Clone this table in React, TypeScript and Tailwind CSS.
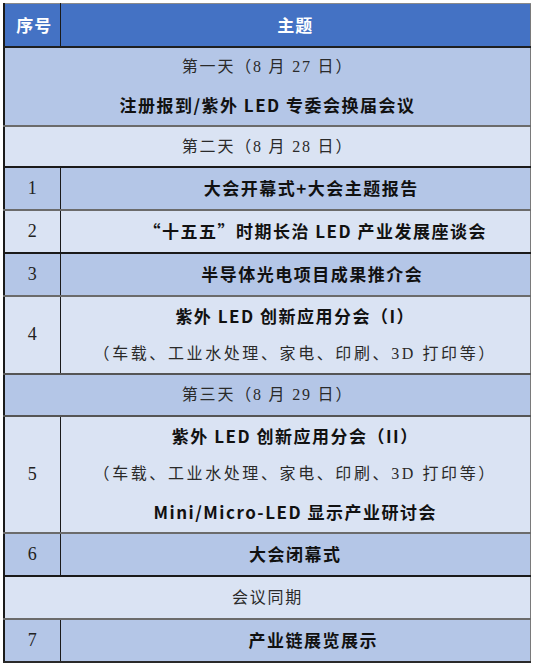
const serif = "font-['Liberation_Serif','Noto_Sans_CJK_SC',serif]";
const sans = "font-['Noto_Sans_CJK_SC','Liberation_Sans',sans-serif]";

const dark = "bg-[#b4c6e7]";
const light = "bg-[#dae3f3]";

type Line = { text: string; bold?: boolean; shift?: string; wide?: boolean };

type Row = {
	no?: string;
	lines: Line[];
	bg: string;
	h: string;
	top: string;
	pad?: string;
};

const rows: Row[] = [
	{
		lines: [{ text: "第一天（8 月 27 日）" }, { text: "注册报到/紫外 LED 专委会换届会议", bold: true }],
		bg: dark,
		h: "h-[79px]",
		top: "border-t-[#1f1f1f]",
		pad: "leading-[38px] pb-[1px]",
	},
	{ lines: [{ text: "第二天（8 月 28 日）" }], bg: light, h: "h-[41px]", top: "border-t-[#6b6b6b]" },
	{
		no: "1",
		lines: [{ text: "大会开幕式+大会主题报告", bold: true, shift: "pl-[32px]" }],
		bg: dark,
		h: "h-[43px]",
		top: "border-t-[#1a1a1a]",
	},
	{
		no: "2",
		lines: [{ text: "“十五五”时期长治 LED 产业发展座谈会", bold: true, shift: "pl-[40px]" }],
		bg: light,
		h: "h-[43px]",
		top: "border-t-[#6b6b6b]",
	},
	{
		no: "3",
		lines: [{ text: "半导体光电项目成果推介会", bold: true, shift: "pl-[34px]" }],
		bg: dark,
		h: "h-[43px]",
		top: "border-t-[#1a1a1a]",
	},
	{
		no: "4",
		lines: [
			{ text: "紫外 LED 创新应用分会（I）", bold: true },
			{ text: "（车载、工业水处理、家电、印刷、3D 打印等）", wide: true },
		],
		bg: light,
		h: "h-[78px]",
		top: "border-t-[#6b6b6b]",
	},
	{ lines: [{ text: "第三天（8 月 29 日）" }], bg: dark, h: "h-[42px]", top: "border-t-[#555]" },
	{
		no: "5",
		lines: [
			{ text: "紫外 LED 创新应用分会（II）", bold: true },
			{ text: "（车载、工业水处理、家电、印刷、3D 打印等）", wide: true },
			{ text: "Mini/Micro-LED 显示产业研讨会", bold: true },
		],
		bg: light,
		h: "h-[117px]",
		top: "border-t-[#555]",
	},
	{ no: "6", lines: [{ text: "大会闭幕式", bold: true }], bg: dark, h: "h-[43px]", top: "border-t-[#6b6b6b]" },
	{ lines: [{ text: "会议同期" }], bg: light, h: "h-[43px]", top: "border-t-[#1a1a1a]" },
	{
		no: "7",
		lines: [{ text: "产业链展览展示", bold: true, shift: "pl-[36px]" }],
		bg: dark,
		h: "h-[43px]",
		top: "border-t-[#6b6b6b]",
	},
];

const LineText = ({ line }: { line: Line }) =>
	line.bold ? (
		<div className={`${sans} font-bold text-[17px] tracking-[1.5px] text-[#111] ${line.shift ?? ""}`}>
			{line.text}
		</div>
	) : (
		<div
			className={`${serif} text-[16px] text-[#2a2a2a] ${line.wide ? "tracking-[2.6px]" : "tracking-[1.8px]"}`}>
			{line.text}
		</div>
	);

export default function App() {
	return (
		<div className="w-[536px] h-[665px] bg-white pt-[3px] pl-[3px]">
			<table className="w-[528px] border-collapse border-l-2 border-l-[#1a1a1a] border-r border-r-[#7a7a7a] border-b-2 border-b-[#2a2a2a] table-fixed">
				<colgroup>
					<col className="w-[56px]" />
					<col />
				</colgroup>
				<thead>
					<tr className="h-[43px] bg-[#4472c4] border-t border-t-[#8a8a8a]">
						<th className={`${sans} font-bold text-[17px] tracking-[1px] text-white border-r border-r-[#1a1a1a] pl-1`}>
							序号
						</th>
						<th className={`${sans} font-bold text-[17px] tracking-[1px] text-white`}>主题</th>
					</tr>
				</thead>
				<tbody>
					{rows.map((row, i) => (
						<tr key={i} className={`${row.bg} ${row.h} border-t-2 ${row.top}`}>
							{row.no ? (
								<>
									<td className={`${serif} text-[18px] text-[#222] text-center border-r border-r-[#1a1a1a]`}>
										{row.no}
									</td>
									<td className="text-center leading-[38px]">
										{row.lines.map((l, j) => (
											<LineText key={j} line={l} />
										))}
									</td>
								</>
							) : (
								<td colSpan={2} className={`text-center ${row.pad ?? "leading-[39px]"}`}>
									{row.lines.map((l, j) => (
										<LineText key={j} line={l} />
									))}
								</td>
							)}
						</tr>
					))}
				</tbody>
			</table>
		</div>
	);
}
